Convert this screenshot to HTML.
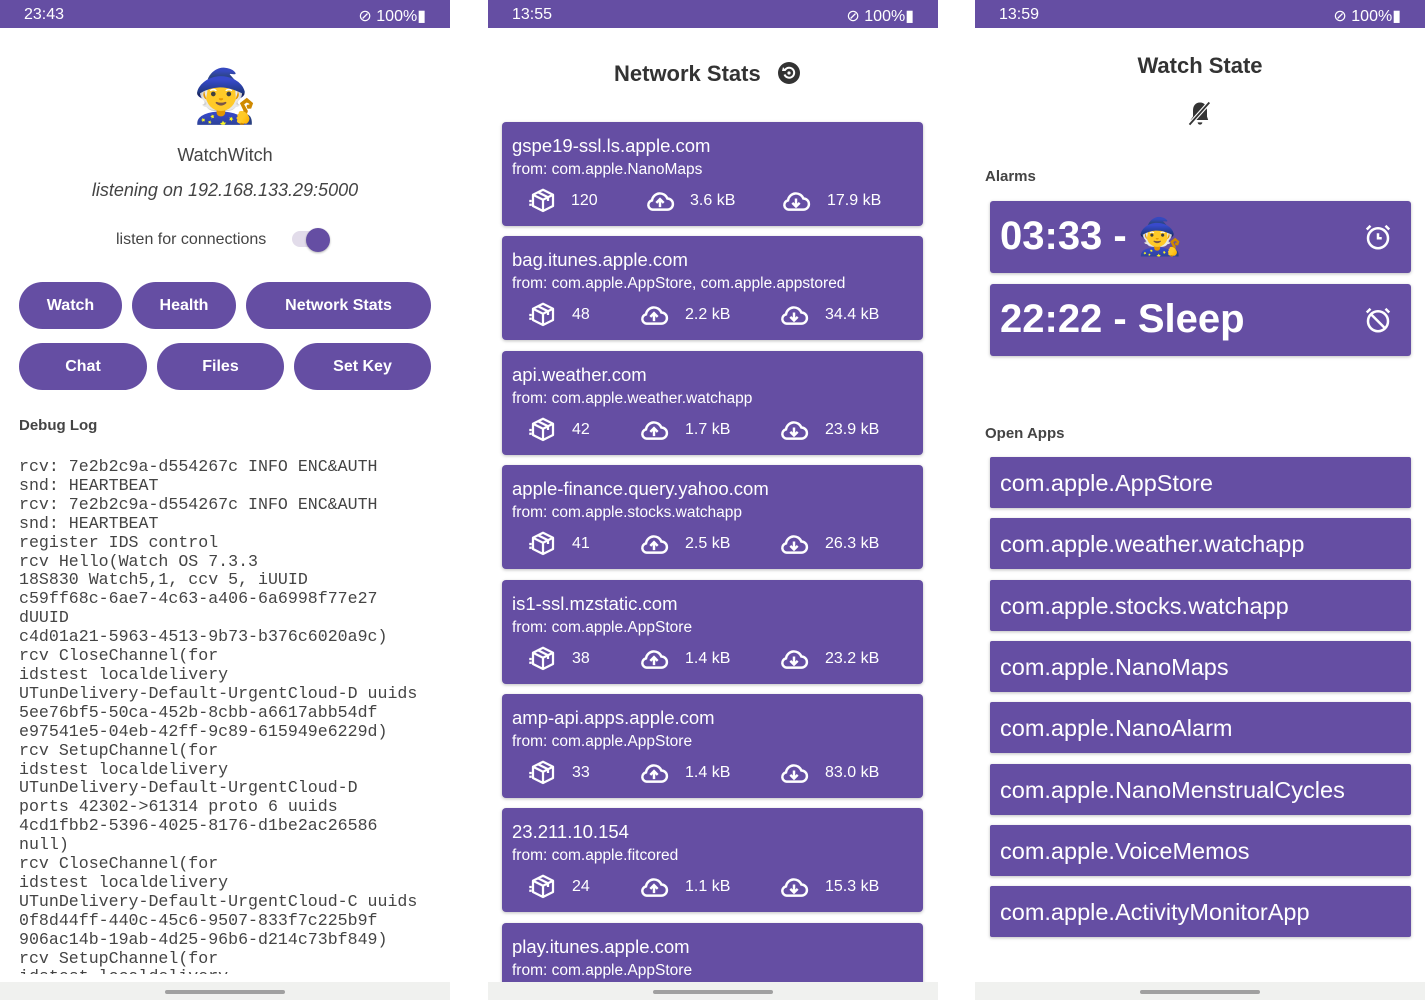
<!DOCTYPE html>
<html><head><meta charset="utf-8"><style>
*{margin:0;padding:0;box-sizing:border-box}
body{width:1425px;height:1000px;background:#fff;position:relative;overflow:hidden;font-family:"Liberation Sans",Roboto,sans-serif;color:#333}
.scr{position:absolute;top:0;width:450px;height:1000px;background:#fff;overflow:hidden}
.sb{position:absolute;left:0;top:0;right:0;height:28px;background:#654ea3;color:#fff;font-size:16px}
.sb .t{position:absolute;left:24px;top:6px}
.sb .r{position:absolute;right:24px;top:6px}
.nav{position:absolute;left:0;right:0;top:982px;height:18px;background:#f0f1ef}
.nav i{position:absolute;left:165px;top:8px;width:120px;height:4px;border-radius:2px;background:#a0a0a0}
.a{position:absolute}
.btn{position:absolute;background:#654ea3;color:#fff;border-radius:24px;height:47px;font-weight:bold;font-size:16px;display:flex;align-items:center;justify-content:center}
.log{position:absolute;left:19px;top:458px;font-family:"Liberation Mono",monospace;font-size:16.6px;line-height:18.9px;color:#444;white-space:pre}
.card{position:absolute;left:14px;width:421px;height:104px;background:#654ea3;border-radius:4px;color:#fff;box-shadow:0 1px 3px rgba(0,0,0,.25)}
.card .h{position:absolute;left:10px;top:13px;font-size:18.5px}
.card .f{position:absolute;left:10px;top:39px;font-size:15.5px}
.card .s{position:absolute;font-size:16px}
.ic{position:absolute;top:64px}
.app{position:absolute;left:15px;width:421px;height:51px;background:#654ea3;color:#fff;font-size:23.5px;padding:13px 0 0 10px;box-shadow:0 1px 3px rgba(0,0,0,.25);border-radius:2px}
.al{position:absolute;left:15px;width:421px;height:72px;background:#654ea3;color:#fff;font-weight:bold;font-size:40px;box-shadow:0 1px 3px rgba(0,0,0,.25);border-radius:3px}
</style></head><body>

<div class="scr" style="left:0">
<div class="sb"><span class="t">23:43</span><span class="r">⊘ 100%▮</span></div>
<div class="a" style="left:0;width:450px;top:62px;text-align:center;font-size:52px;line-height:70px">🧙</div>
<div class="a" style="left:0;width:450px;top:145px;text-align:center;font-size:18px;color:#444">WatchWitch</div>
<div class="a" style="left:0;width:450px;top:180px;text-align:center;font-size:18px;font-style:italic;color:#444">listening on 192.168.133.29:5000</div>
<div class="a" style="left:116px;top:231px;font-size:16px;color:#444">listen for connections</div>
<div class="a" style="left:292px;top:231px;width:36px;height:16px;border-radius:8px;background:#e2dcea"></div>
<div class="a" style="left:306px;top:228px;width:24px;height:24px;border-radius:12px;background:#654ea3;box-shadow:0 1px 2px rgba(0,0,0,.3)"></div>
<div class="btn" style="left:19px;top:282px;width:103px">Watch</div>
<div class="btn" style="left:132px;top:282px;width:104px">Health</div>
<div class="btn" style="left:246px;top:282px;width:185px">Network Stats</div>
<div class="btn" style="left:19px;top:343px;width:128px">Chat</div>
<div class="btn" style="left:157px;top:343px;width:127px">Files</div>
<div class="btn" style="left:294px;top:343px;width:137px">Set Key</div>
<div class="a" style="left:19px;top:417px;font-size:15px;font-weight:bold;color:#444">Debug Log</div>
<div class="log">rcv: 7e2b2c9a-d554267c INFO ENC&amp;AUTH
snd: HEARTBEAT
rcv: 7e2b2c9a-d554267c INFO ENC&amp;AUTH
snd: HEARTBEAT
register IDS control
rcv Hello(Watch OS 7.3.3
18S830 Watch5,1, ccv 5, iUUID
c59ff68c-6ae7-4c63-a406-6a6998f77e27
dUUID
c4d01a21-5963-4513-9b73-b376c6020a9c)
rcv CloseChannel(for
idstest localdelivery
UTunDelivery-Default-UrgentCloud-D uuids
5ee76bf5-50ca-452b-8cbb-a6617abb54df
e97541e5-04eb-42ff-9c89-615949e6229d)
rcv SetupChannel(for
idstest localdelivery
UTunDelivery-Default-UrgentCloud-D
ports 42302-&gt;61314 proto 6 uuids
4cd1fbb2-5396-4025-8176-d1be2ac26586
null)
rcv CloseChannel(for
idstest localdelivery
UTunDelivery-Default-UrgentCloud-C uuids
0f8d44ff-440c-45c6-9507-833f7c225b9f
906ac14b-19ab-4d25-96b6-d214c73bf849)
rcv SetupChannel(for
idstest localdelivery</div>
<div class="a" style="left:0;top:974px;width:450px;height:8px;background:#fff"></div>
<div class="nav"><i></i></div>
</div>

<div class="scr" style="left:488px">
<div class="sb"><span class="t">13:55</span><span class="r">⊘ 100%▮</span></div>
<div class="a" style="left:126px;top:61px;font-size:22px;font-weight:bold;color:#333">Network Stats</div>
<svg class="a" style="left:289px;top:61px" width="24" height="24" viewBox="0 0 24 24"><circle cx="12" cy="12" r="11" fill="#333"/><path d="M8 9 A5 5 0 1 1 7.5 13.5" stroke="#fff" stroke-width="2" fill="none"/><path d="M6 6 L9 10 L5 10Z" fill="#fff"/><circle cx="12" cy="12" r="1.6" fill="#fff"/></svg>
<div id="cards"></div>
<div class="nav"><i></i></div>
</div>

<div class="scr" style="left:975px">
<div class="sb"><span class="t">13:59</span><span class="r">⊘ 100%▮</span></div>
<div class="a" style="left:0;width:450px;top:53px;text-align:center;font-size:22px;font-weight:bold;color:#333">Watch State</div>
<svg class="a" style="left:211px;top:99px" width="28" height="28" viewBox="0 0 24 24"><path d="M12 3 C8 3 6 6 6 10 L6 15 L4 18 L19 18 L18 15 L18 10 C18 6 16 3 12 3Z M10 20 a2 2 0 0 0 4 0Z" fill="#333"/><path d="M3 22 L20 3" stroke="#fff" stroke-width="3.5"/><path d="M3 22 L20 3" stroke="#333" stroke-width="1.6"/></svg>
<div class="a" style="left:10px;top:168px;font-size:15px;font-weight:bold;color:#444">Alarms</div>
<div class="al" style="top:201px"><span style="position:absolute;left:10px;top:13px">03:33 - <span style="font-size:36px">🧙</span></span>
<svg style="position:absolute;right:18px;top:21px" width="30" height="30" viewBox="0 0 24 24" fill="none" stroke="#fff" stroke-width="2"><circle cx="12" cy="13" r="8"/><path d="M12 9v4h3M3 6l3-3M21 6l-3-3"/></svg></div>
<div class="al" style="top:284px"><span style="position:absolute;left:10px;top:13px">22:22 - Sleep</span>
<svg style="position:absolute;right:18px;top:21px" width="30" height="30" viewBox="0 0 24 24" fill="none" stroke="#fff" stroke-width="2"><circle cx="12" cy="13" r="8"/><path d="M6 7l12 12M3 6l3-3M21 6l-3-3"/></svg></div>
<div class="a" style="left:10px;top:425px;font-size:15px;font-weight:bold;color:#444">Open Apps</div>
<div class="app" style="top:457px">com.apple.AppStore</div>
<div class="app" style="top:518px">com.apple.weather.watchapp</div>
<div class="app" style="top:580px">com.apple.stocks.watchapp</div>
<div class="app" style="top:641px">com.apple.NanoMaps</div>
<div class="app" style="top:702px">com.apple.NanoAlarm</div>
<div class="app" style="top:764px">com.apple.NanoMenstrualCycles</div>
<div class="app" style="top:825px">com.apple.VoiceMemos</div>
<div class="app" style="top:886px">com.apple.ActivityMonitorApp</div>
<div class="nav"><i></i></div>
</div>

<script>
var d=[["gspe19-ssl.ls.apple.com","com.apple.NanoMaps","120","3.6 kB","17.9 kB"],
["bag.itunes.apple.com","com.apple.AppStore, com.apple.appstored","48","2.2 kB","34.4 kB"],
["api.weather.com","com.apple.weather.watchapp","42","1.7 kB","23.9 kB"],
["apple-finance.query.yahoo.com","com.apple.stocks.watchapp","41","2.5 kB","26.3 kB"],
["is1-ssl.mzstatic.com","com.apple.AppStore","38","1.4 kB","23.2 kB"],
["amp-api.apps.apple.com","com.apple.AppStore","33","1.4 kB","83.0 kB"],
["23.211.10.154","com.apple.fitcored","24","1.1 kB","15.3 kB"],
["play.itunes.apple.com","com.apple.AppStore","","",""]];
var box='<svg width="30" height="30" viewBox="0 0 24 24" fill="none" stroke="#fff" stroke-width="1.8" stroke-linejoin="round"><path d="M12 3l8 4v9l-8 4-8-4V7z M4 7l8 4 8-4 M12 11v9 M8 5l8 4v3"/><path d="M1 12h2M1 15h2"/></svg>';
function cloud(up){return '<svg width="32" height="30" viewBox="0 0 26 24" fill="none" stroke="#fff" stroke-width="2"><path d="M7 19h12a4.5 4.5 0 0 0 0-9 6.5 6.5 0 0 0-12.5 1.5A3.8 3.8 0 0 0 7 19z"/>'+(up?'<path d="M13 17v-6M10 13.5l3-3 3 3"/>':'<path d="M13 10v6M10 13.5l3 3 3-3"/>')+'</svg>';}
var h='';
for(var i=0;i<d.length;i++){var c=d[i],t=122+i*114.4;
h+='<div class="card" style="top:'+t+'px"><div class="h">'+c[0]+'</div><div class="f">from: '+c[1]+'</div>';
if(c[2]){
h+='<span class="ic" style="left:26px">'+box+'</span><div class="s" style="left:'+(i==0?69:70)+'px;top:70px">'+c[2]+'</div>';
h+='<span class="ic" style="left:'+(i==0?142:136)+'px">'+cloud(1)+'</span><div class="s" style="left:'+(i==0?188:183)+'px;top:70px">'+c[3]+'</div>';
h+='<span class="ic" style="left:'+(i==0?278:276)+'px">'+cloud(0)+'</span><div class="s" style="left:'+(i==0?325:323)+'px;top:70px">'+c[4]+'</div>';}
h+='</div>';}
document.getElementById('cards').innerHTML=h;
</script>
</body></html>
